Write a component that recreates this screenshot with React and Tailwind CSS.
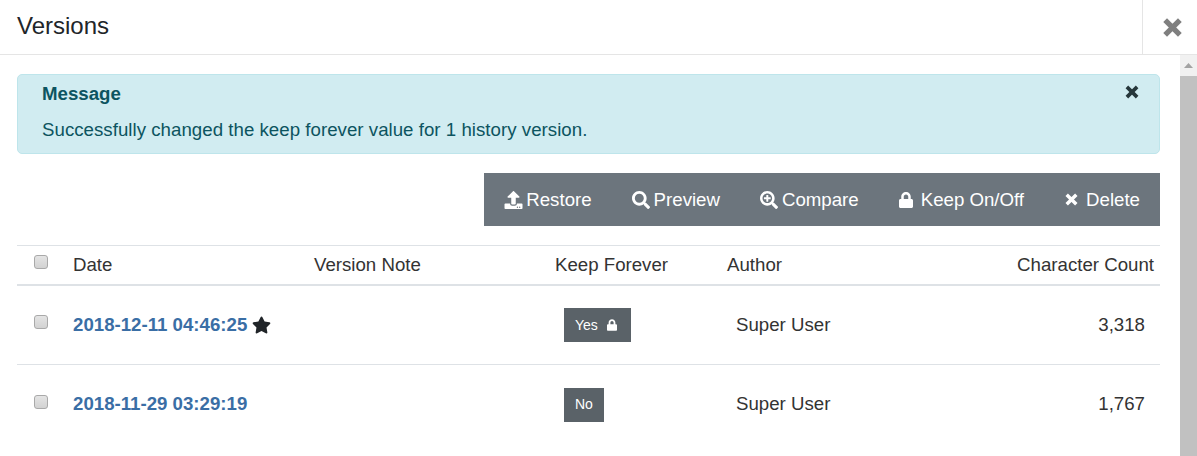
import React from 'react';
import { FaUpload, FaSearch, FaSearchPlus, FaLock, FaStar } from 'react-icons/fa';

// chunky times glyph, the package one is too thin
const XIcon = ({ className }) => (
    <svg viewBox="0 0 20 20" className={className} fill="none">
        <path d="M3.6 3.6L16.4 16.4M16.4 3.6L3.6 16.4" stroke="currentColor" strokeWidth="4.6" />
    </svg>
);

const actions = [
    { label: 'Restore', icon: FaUpload, iconClass: 'w-[19px] h-[18px]' },
    { label: 'Preview', icon: FaSearch, iconClass: 'w-[18px] h-[18px]' },
    { label: 'Compare', icon: FaSearchPlus, iconClass: 'w-[18px] h-[18px]' },
    { label: 'Keep On/Off', icon: FaLock, iconClass: 'w-[14px] h-[16px]' },
    { label: 'Delete', icon: XIcon, iconClass: 'w-[15px] h-[15px]' },
];

const rows = [
    { date: '2018-12-11 04:46:25', starred: true, keep: 'Yes', author: 'Super User', count: '3,318' },
    { date: '2018-11-29 03:29:19', starred: false, keep: 'No', author: 'Super User', count: '1,767' },
];

const Checkbox = () => (
    <span className="block w-[14px] h-[14px] ml-[17px] mb-[6px] rounded-[3px] border border-[#a9a9a9] bg-gradient-to-b from-[#e4e4e4] to-[#d2d2d2]" />
);

const App = () => {
    return (
        <div className="w-[1197px] h-[456px] overflow-hidden bg-white font-['Liberation_Sans',Arial,sans-serif] text-[18.67px] text-[#333]">
            <header className="flex h-[55px] border-b border-[#e5e5e5]">
                <h1 className="flex-1 pl-[17px] pt-[11px] text-[24px] leading-[30px] text-[#212529]">Versions</h1>
                <button className="flex w-[55px] items-center justify-center pl-[4px] border-l border-[#e5e5e5] text-[#7f7f7f]">
                    <XIcon className="w-[23px] h-[23px]" />
                </button>
            </header>
            <div className="flex h-[401px]">
                <main className="flex-1 pl-[17px] pr-[20px] pt-[19px]">
                    <div className="relative h-[80px] rounded-[5px] border border-[#bee5eb] bg-[#d1ecf1] pl-[24px] text-[#0c5460]">
                        <div className="pt-[6px] leading-[26px] font-bold">Message</div>
                        <div className="pt-[12px] leading-[22px] tracking-[0.03px]">Successfully changed the keep forever value for 1 history version.</div>
                        <XIcon className="absolute right-[19px] top-[9px] w-[16px] h-[16px] text-[#26373b]" />
                    </div>
                    <div className="mt-[19px] flex justify-end">
                        <div className="flex h-[53px] items-center bg-[#6c757d] px-[20px] gap-[40px] text-white">
                            {actions.map(({ label, icon: Icon, iconClass }) => (
                                <span key={label} className="flex items-center">
                                    <span className="flex w-[22px]">
                                        <Icon className={iconClass} />
                                    </span>
                                    {label}
                                </span>
                            ))}
                        </div>
                    </div>
                    <div className="mt-[19px]">
                        <div className="grid h-[41px] grid-cols-[56px_241px_241px_172px_1fr] items-center border-t border-b-2 border-t-[#dee2e6] border-b-[#dee2e6]">
                            <Checkbox />
                            <div>Date</div>
                            <div>Version Note</div>
                            <div>Keep Forever</div>
                            <div className="flex justify-between pr-[6px]">
                                <span>Author</span>
                                <span>Character Count</span>
                            </div>
                        </div>
                        {rows.map((row, i) => (
                            <div key={row.date} className={`grid h-[79px] grid-cols-[56px_241px_241px_172px_1fr] items-center ${i === 0 ? 'border-b border-[#dee2e6]' : ''}`}>
                                <Checkbox />
                                <div className="flex items-center gap-[5px] pb-[1px] font-bold text-[#3a6ea5]">
                                    {row.date}
                                    {row.starred && <FaStar className="w-[19px] h-[18px] text-[#212529]" />}
                                </div>
                                <div />
                                <div className="pl-[9px]">
                                    <span className={`inline-flex h-[34px] items-center gap-[9px] bg-[#5a6268] pl-[11px] text-[14px] text-white ${row.keep === 'Yes' ? 'pr-[14px]' : 'pr-[11px]'}`}>
                                        {row.keep}
                                        {row.keep === 'Yes' && <FaLock className="w-[10px] h-[12px]" />}
                                    </span>
                                </div>
                                <div className="flex justify-between pl-[9px] pr-[15px] pb-[1px]">
                                    <span>{row.author}</span>
                                    <span>{row.count}</span>
                                </div>
                            </div>
                        ))}
                    </div>
                </main>
                <div className="w-[17px] flex flex-col bg-[#f1f1f1]">
                    <div className="flex h-[21px] items-center justify-center">
                        <svg width="9" height="5" viewBox="0 0 9 5"><path d="M4.5 0L9 5H0z" fill="#a3a3a3" /></svg>
                    </div>
                    <div className="flex-1 bg-[#c1c1c1]" />
                </div>
            </div>
        </div>
    );
};

export default App;
